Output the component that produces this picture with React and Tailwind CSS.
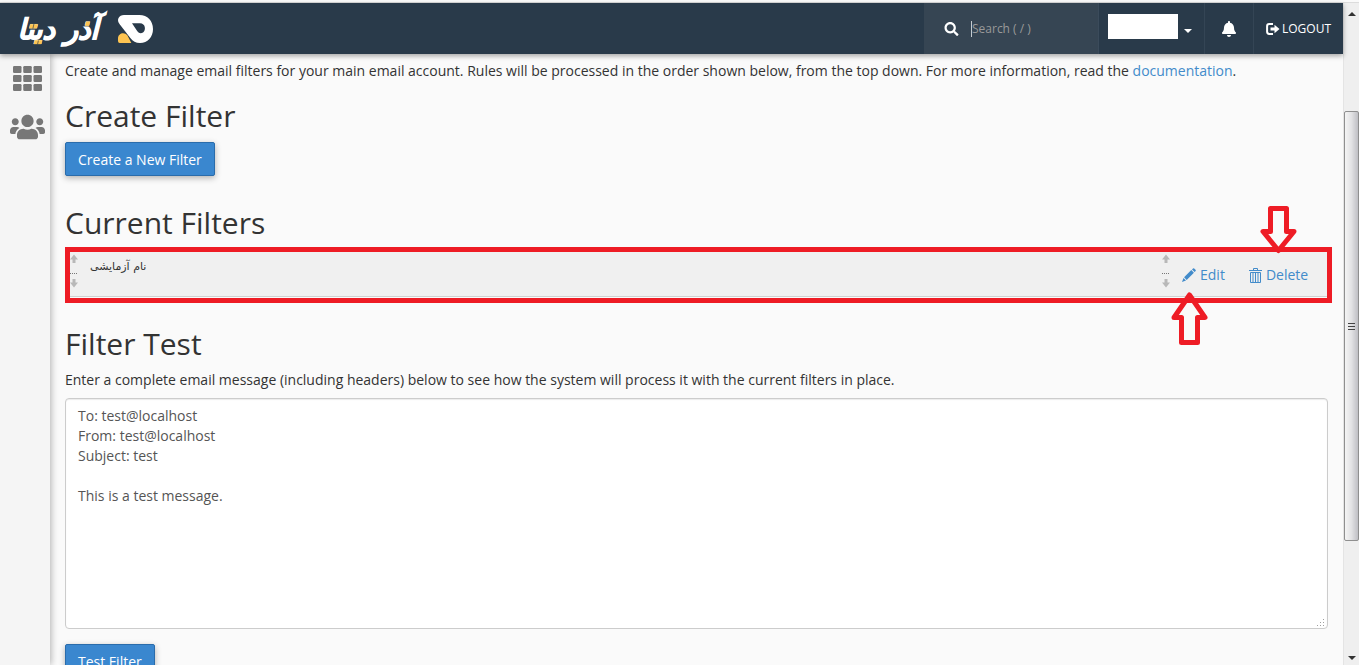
import React from "react";
import { FaSearch, FaBell, FaUsers } from "react-icons/fa";

function Logo() {
  return (
    <svg viewBox="54 24 408 120" className="h-10 w-[136px]" role="img" aria-label="آذر دیتا">
      <text
        x="174"
        y="114"
        textAnchor="middle"
        direction="rtl"
        fill="#ffffff"
        stroke="#ffffff"
        strokeWidth="3"
        fontSize="84"
        fontWeight="700"
        fontStyle="italic"
        fontFamily="'DejaVu Sans', sans-serif"
      >
        آذر دیتا
      </text>
      <g fill="#fdc452" stroke="#fdc452" strokeWidth="1">
        <path d="M90.7 70 H112.8 L110 82 H87.9 Z" />
        <path d="M104.1 118 H126.2 L123.7 129 H101.3 Z" />
        <path d="M257.9 62 H269.6 L266.8 74 H255.1 Z" />
      </g>
      <path d="M101.8 69 L98.6 83 M115.2 118.5 L112.6 130" stroke="#293a4a" strokeWidth="2" />
      <path
        fill="#ffffff"
        fillRule="evenodd"
        d="M372 42 H418 C443 42 459 60 459 84 C459 108 443 126 420 126 C407 126 399 121 391 111 L359 70 C348 56 357 42 372 42 Z M396 67 L412 91 C417 98 424 98 430 94 C438 88 437 67 420 67 Z"
      />
      <path fill="#fdc452" d="M359 126 C353 126 354 118 354 112 C354 97 373 91 382 103 L394 126 Z" />
    </svg>
  );
}

function GridIcon() {
  return (
    <svg viewBox="0 0 29 25" className="h-[25px] w-[29px]" fill="#777777" aria-hidden="true">
      {[0, 10.25, 20.5].map((x) =>
        [0, 9, 18].map((y) => <rect key={`${x}-${y}`} x={x} y={y} width="8.5" height="7" rx="1.2" />)
      )}
    </svg>
  );
}

function LogoutIcon() {
  return (
    <svg viewBox="0 0 14 12" className="h-3 w-3.5" aria-hidden="true">
      <path d="M7 1.1 H3.2 Q1.1 1.1 1.1 3.2 V8.8 Q1.1 10.9 3.2 10.9 H7" fill="none" stroke="#fff" strokeWidth="2" />
      <path d="M4.5 4.5 H8.5 V1.8 L13.5 6 L8.5 10.2 V7.5 H4.5 Z" fill="#fff" />
    </svg>
  );
}

function PencilIcon() {
  return (
    <svg viewBox="0 0 14 14" className="h-3.5 w-3.5" fill="currentColor" aria-hidden="true">
      <path d="M11 0.4 Q11.6 -0.1 12.2 0.5 L13.5 1.8 Q14.1 2.4 13.6 3 L12.6 4 L10 1.4 Z M9.3 2.1 L11.9 4.7 L4.7 11.9 L2.1 9.3 Z M1.5 10 L4 12.5 L0 14 Z" />
    </svg>
  );
}

function TrashIcon() {
  return (
    <svg viewBox="0 0 13 15" className="h-[15px] w-[13px]" fill="none" stroke="currentColor" aria-hidden="true">
      <path d="M0 2.5 H13 M4.5 2.5 V0.5 H8.5 V2.5 M1.5 4.5 H11.5 V14.5 H1.5 Z M4 5 V14 M6.5 5 V14 M9 5 V14" />
    </svg>
  );
}

function DragHandle() {
  return (
    <svg viewBox="0 0 8 34" className="block h-[34px] w-2" fill="#b8b8b8" aria-hidden="true">
      <path d="M4 0.5 L8 5.5 H5.5 V9 H2.5 V5.5 H0 Z M4 33.5 L8 28.5 H5.5 V25 H2.5 V28.5 H0 Z" />
      <path d="M0 19.5 H8" stroke="#777777" strokeDasharray="1 1" />
    </svg>
  );
}

function Heading({ children }) {
  return <h2 className="text-[30px] leading-[33px] text-[#333333]">{children}</h2>;
}

function PrimaryButton({ children }) {
  return (
    <button
      type="button"
      className="h-[34px] rounded-xs border border-[#2a6cab] bg-[#3a87cf] px-3 pt-0.5 text-sm leading-5 text-white shadow-[0_2px_6px_rgba(0,0,0,0.3)]"
    >
      {children}
    </button>
  );
}

function Header() {
  return (
    <header className="relative z-10 flex h-[51px] shrink-0 items-stretch justify-between bg-[#293a4a] shadow-[0_2px_5px_rgba(0,0,0,0.35)]">
      <a href="#home" className="flex items-center pl-[18px]">
        <Logo />
      </a>
      <div className="flex text-white">
        <label className="flex w-[175px] items-center gap-3 border-r border-[#3b4b5b] bg-[#364553] pl-5">
          <FaSearch className="h-3.5 w-[15px] shrink-0" />
          <span className="sr-only">Search</span>
          <span className="flex h-4 items-center border-l border-[#c5cbd0]">
            <input
              type="text"
              placeholder="Search ( / )"
              className="block h-6 w-28 bg-transparent text-xs text-white outline-none placeholder:text-[#999999]"
            />
          </span>
        </label>
        <button type="button" aria-label="Account" className="flex w-[106px] items-center gap-1.5 border-r border-[#344555] pl-[9px]">
          <span className="mb-1 h-[25px] w-[70px] bg-white" />
          <svg viewBox="0 0 8 4" className="mt-1 h-1 w-2" aria-hidden="true">
            <path d="M0 0 H8 L4 4 Z" fill="#fff" />
          </svg>
        </button>
        <button type="button" aria-label="Notifications" className="flex w-[49px] items-center justify-center border-r border-[#344555]">
          <FaBell className="h-4 w-4" />
        </button>
        <a href="#logout" className="flex items-center gap-0.5 px-3 text-xs">
          <LogoutIcon />
          LOGOUT
        </a>
      </div>
    </header>
  );
}

function Sidebar() {
  return (
    <nav className="flex w-[50px] shrink-0 flex-col items-center gap-5 bg-[#f5f5f5] pt-3 pl-1 shadow-[1px_0_7px_rgba(0,0,0,0.3)]">
      <a href="#tools" aria-label="Tools">
        <GridIcon />
      </a>
      <a href="#users" aria-label="User Manager">
        <FaUsers className="h-8 w-[35px] text-[#777777]" />
      </a>
    </nav>
  );
}

function FilterTable() {
  return (
    <div className="relative mt-2 -mr-1">
      <div className="h-14 border-[5px] border-[#ee1c25] bg-[#fafafa]">
        <table className="w-full border-collapse bg-[#f0f0f0]">
          <tbody>
            <tr className="h-11 border-b border-[#d0d0d0] align-top">
              <td className="w-5 p-0 pt-0.5">
                <DragHandle />
              </td>
              <td className="p-0 pt-1 text-xs leading-5 text-[#333333]">
                <span lang="fa" dir="rtl" className="font-['DejaVu_Sans',sans-serif] text-[11px]">نام آزمایشی</span>
              </td>
              <td className="w-5 p-0 pt-0.5">
                <DragHandle />
              </td>
              <td className="w-[145px] p-0 pt-[13px]">
                <div className="flex gap-6 text-sm leading-5 text-[#428bca]">
                  <a href="#edit" className="flex items-center gap-1">
                    <PencilIcon />
                    Edit
                  </a>
                  <a href="#delete" className="flex items-center gap-1">
                    <TrashIcon />
                    Delete
                  </a>
                </div>
              </td>
            </tr>
          </tbody>
        </table>
      </div>
      <svg viewBox="0 0 40 50" className="absolute right-[34px] -top-[43px] h-[50px] w-10" fill="none" stroke="#ee1c25" strokeWidth="5" strokeLinejoin="round" aria-hidden="true">
        <path d="M12.5 4.5 H28.5 V27.5 H36 L20.5 46.5 L5 27.5 H12.5 Z" />
      </svg>
      <svg viewBox="0 0 40 58" className="absolute top-[43px] right-[123px] h-[58px] w-10" fill="none" stroke="#ee1c25" strokeWidth="5" strokeLinejoin="round" aria-hidden="true">
        <path d="M20.5 5 L36 27.5 H28.5 V52.5 H12.5 V27.5 H5 Z" />
      </svg>
    </div>
  );
}

function ScrollTrack() {
  return (
    <div aria-hidden="true" className="flex w-4 shrink-0 flex-col items-center border-l border-[#e4e4e4] bg-[#efefef] py-[9px]">
      <svg viewBox="0 0 8 4" className="h-1 w-2 shrink-0">
        <path d="M0 4 L4 0 L8 4 Z" fill="#333" />
      </svg>
      <div className="flex-[94]" />
      <div className="flex w-full flex-[422] flex-col items-center justify-center gap-0.5 rounded-xs border border-[#8f8f8f] bg-linear-to-r from-[#f4f4f4] via-[#e2e2e4] to-[#bfbfc4]">
        <span className="h-px w-[7px] bg-[#444444]" />
        <span className="h-px w-[7px] bg-[#444444]" />
        <span className="h-px w-[7px] bg-[#444444]" />
      </div>
      <div className="flex-[113]" />
      <svg viewBox="0 0 8 4" className="-mb-1 h-1 w-2 shrink-0">
        <path d="M0 0 L4 4 L8 0 Z" fill="#333" />
      </svg>
    </div>
  );
}

const message = "To: test@localhost\nFrom: test@localhost\nSubject: test\n\nThis is a test message.";

export default function App() {
  return (
    <div className="flex h-screen flex-col overflow-hidden bg-[#fafafa] font-['Open_Sans','Noto_Sans',sans-serif] text-sm leading-5 text-[#333333]">
      <div className="h-[3px] shrink-0 border-b border-[#dcdcdc]" />
      <div className="flex min-h-0 flex-1">
        <div className="flex min-w-0 flex-1 flex-col">
          <Header />
          <div className="flex min-h-0 flex-1">
            <Sidebar />
            <main className="flex min-w-0 flex-1 flex-col px-[15px] pt-[7px]">
              <p>
                Create and manage email filters for your main email account. Rules will be processed in the order shown
                below, from the top down. For more information, read the{" "}
                <a href="#documentation" className="text-[#428bca]">documentation</a>.
              </p>
              <section className="mt-[18px]">
                <Heading>Create Filter</Heading>
                <div className="mt-2.5">
                  <PrimaryButton>Create a New Filter</PrimaryButton>
                </div>
              </section>
              <section className="mt-[30px]">
                <Heading>Current Filters</Heading>
                <FilterTable />
              </section>
              <section className="mt-6">
                <Heading>Filter Test</Heading>
                <label htmlFor="message" className="mt-2.5 block">
                  Enter a complete email message (including headers) below to see how the system will process it with
                  the current filters in place.
                </label>
                <div className="relative mt-2">
                  <textarea
                    id="message"
                    defaultValue={message}
                    className="block h-[231px] w-full resize-none rounded border border-[#cccccc] bg-white px-3 py-[7px] text-sm leading-5 text-[#555555] shadow-[inset_0_1px_1px_rgba(0,0,0,0.08)] outline-none"
                  />
                  <svg viewBox="0 0 8 8" className="absolute right-[3px] bottom-0.5 h-2 w-2" fill="#a0a0a0" aria-hidden="true">
                    <path d="M6 0h1v1h-1z M3 3h1v1h-1z M6 3h1v1h-1z M0 6h1v1h-1z M3 6h1v1h-1z M6 6h1v1h-1z" />
                  </svg>
                </div>
                <div className="mt-[15px]">
                  <PrimaryButton>Test Filter</PrimaryButton>
                </div>
              </section>
            </main>
          </div>
        </div>
        <ScrollTrack />
      </div>
    </div>
  );
}
